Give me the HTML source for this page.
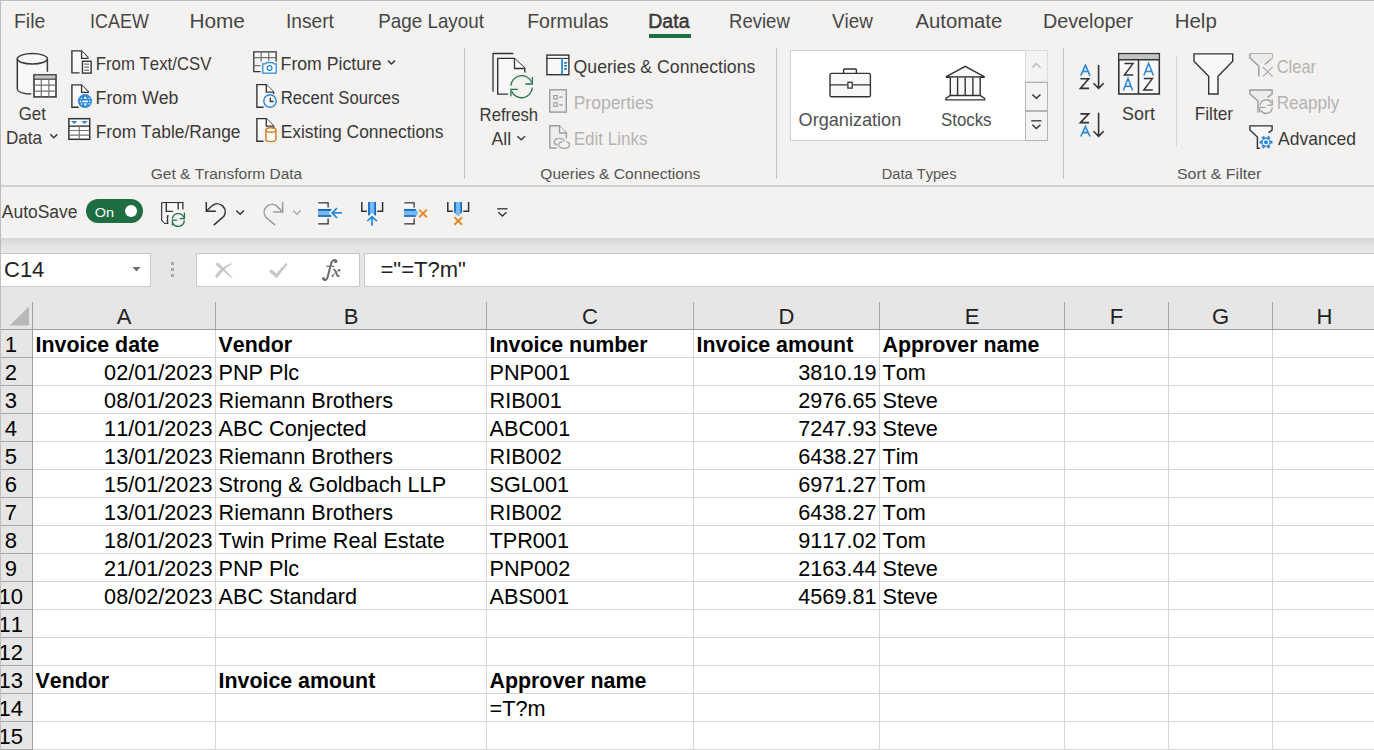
<!DOCTYPE html>
<html><head><meta charset="utf-8"><style>
html,body{margin:0;padding:0;width:1374px;height:750px;overflow:hidden;background:#f3f2f1}
svg{display:block}
text{font-family:"Liberation Sans",sans-serif;font-kerning:none}
</style></head><body>
<svg width="1374" height="750" viewBox="0 0 1374 750">
<rect x="0" y="0" width="1374" height="750" fill="#f3f2f1"/>
<!-- window border -->
<rect x="0" y="0" width="1374" height="1" fill="#bdbdbc"/>
<rect x="0" y="0" width="1" height="750" fill="#bdbdbc"/>
<rect x="1" y="1" width="1373" height="1" fill="#f8f8f7"/>
<!-- tab underline -->
<rect x="649" y="34" width="42" height="4" fill="#1e7145"/>
<!-- ribbon bottom -->
<rect x="0" y="185" width="1374" height="2" fill="#d2d1d0"/>
<!-- group separators -->
<rect x="464" y="48" width="1" height="131" fill="#c8c6c4"/>
<rect x="776" y="48" width="1" height="131" fill="#c8c6c4"/>
<rect x="1063" y="48" width="1" height="131" fill="#c8c6c4"/>
<rect x="1176" y="56" width="1" height="91" fill="#d6d5d4"/>
<!-- QAT / formula bar area -->
<rect x="1" y="238" width="1373" height="64" fill="#e6e6e6"/>
<rect x="1" y="238" width="1373" height="2" fill="#d6d6d6"/>
<rect x="1" y="240" width="1373" height="2" fill="#dbdbdb"/>
<rect x="1" y="242" width="1373" height="2" fill="#dfdfdf"/>
<rect x="1" y="244" width="1373" height="2" fill="#e3e3e3"/>
<!-- name box -->
<rect x="0.5" y="253.5" width="150" height="33" fill="#fff" stroke="#c8c8c8"/>
<path d="M132.5 267 L140.5 267 L136.5 271.5 Z" fill="#6e6e6e"/>
<rect x="171" y="262" width="3" height="3" fill="#a8a8a8"/>
<rect x="171" y="268" width="3" height="3" fill="#a8a8a8"/>
<rect x="171" y="274" width="3" height="3" fill="#a8a8a8"/>
<rect x="196.5" y="253.5" width="163" height="33" fill="#fff" stroke="#c8c8c8"/>
<rect x="364.5" y="253.5" width="1010" height="33" fill="#fff" stroke="#c8c8c8"/>
<text x="4" y="277" font-size="22" fill="#222">C14</text>
<text x="380.5" y="277.3" font-size="22" fill="#222">="=T?m"</text>
<!-- data types gallery -->
<rect x="790.5" y="50.5" width="257" height="90" fill="#fff" stroke="#d0d0d0"/>
<!-- autosave toggle -->
<rect x="86" y="199" width="57" height="24" rx="12" fill="#1e6e42"/>
<circle cx="131" cy="211" r="6" fill="#fff"/>
<rect x="0" y="302" width="1374" height="27" fill="#e6e6e6"/><rect x="0" y="330" width="32" height="420" fill="#e6e6e6"/><rect x="33" y="330" width="1341" height="420" fill="#ffffff"/><line x1="33" y1="357.5" x2="1374" y2="357.5" stroke="#d6d6d6"/><line x1="0" y1="357.5" x2="32" y2="357.5" stroke="#a8a8a8"/><line x1="33" y1="385.5" x2="1374" y2="385.5" stroke="#d6d6d6"/><line x1="0" y1="385.5" x2="32" y2="385.5" stroke="#a8a8a8"/><line x1="33" y1="413.5" x2="1374" y2="413.5" stroke="#d6d6d6"/><line x1="0" y1="413.5" x2="32" y2="413.5" stroke="#a8a8a8"/><line x1="33" y1="441.5" x2="1374" y2="441.5" stroke="#d6d6d6"/><line x1="0" y1="441.5" x2="32" y2="441.5" stroke="#a8a8a8"/><line x1="33" y1="469.5" x2="1374" y2="469.5" stroke="#d6d6d6"/><line x1="0" y1="469.5" x2="32" y2="469.5" stroke="#a8a8a8"/><line x1="33" y1="497.5" x2="1374" y2="497.5" stroke="#d6d6d6"/><line x1="0" y1="497.5" x2="32" y2="497.5" stroke="#a8a8a8"/><line x1="33" y1="525.5" x2="1374" y2="525.5" stroke="#d6d6d6"/><line x1="0" y1="525.5" x2="32" y2="525.5" stroke="#a8a8a8"/><line x1="33" y1="553.5" x2="1374" y2="553.5" stroke="#d6d6d6"/><line x1="0" y1="553.5" x2="32" y2="553.5" stroke="#a8a8a8"/><line x1="33" y1="581.5" x2="1374" y2="581.5" stroke="#d6d6d6"/><line x1="0" y1="581.5" x2="32" y2="581.5" stroke="#a8a8a8"/><line x1="33" y1="609.5" x2="1374" y2="609.5" stroke="#d6d6d6"/><line x1="0" y1="609.5" x2="32" y2="609.5" stroke="#a8a8a8"/><line x1="33" y1="637.5" x2="1374" y2="637.5" stroke="#d6d6d6"/><line x1="0" y1="637.5" x2="32" y2="637.5" stroke="#a8a8a8"/><line x1="33" y1="665.5" x2="1374" y2="665.5" stroke="#d6d6d6"/><line x1="0" y1="665.5" x2="32" y2="665.5" stroke="#a8a8a8"/><line x1="33" y1="693.5" x2="1374" y2="693.5" stroke="#d6d6d6"/><line x1="0" y1="693.5" x2="32" y2="693.5" stroke="#a8a8a8"/><line x1="33" y1="721.5" x2="1374" y2="721.5" stroke="#d6d6d6"/><line x1="0" y1="721.5" x2="32" y2="721.5" stroke="#a8a8a8"/><line x1="33" y1="749.5" x2="1374" y2="749.5" stroke="#d6d6d6"/><line x1="0" y1="749.5" x2="32" y2="749.5" stroke="#a8a8a8"/><line x1="215.5" y1="330" x2="215.5" y2="750" stroke="#d6d6d6"/><line x1="215.5" y1="302" x2="215.5" y2="329" stroke="#a8a8a8"/><line x1="486.5" y1="330" x2="486.5" y2="750" stroke="#d6d6d6"/><line x1="486.5" y1="302" x2="486.5" y2="329" stroke="#a8a8a8"/><line x1="693.5" y1="330" x2="693.5" y2="750" stroke="#d6d6d6"/><line x1="693.5" y1="302" x2="693.5" y2="329" stroke="#a8a8a8"/><line x1="879.5" y1="330" x2="879.5" y2="750" stroke="#d6d6d6"/><line x1="879.5" y1="302" x2="879.5" y2="329" stroke="#a8a8a8"/><line x1="1064.5" y1="330" x2="1064.5" y2="750" stroke="#d6d6d6"/><line x1="1064.5" y1="302" x2="1064.5" y2="329" stroke="#a8a8a8"/><line x1="1168.5" y1="330" x2="1168.5" y2="750" stroke="#d6d6d6"/><line x1="1168.5" y1="302" x2="1168.5" y2="329" stroke="#a8a8a8"/><line x1="1272.5" y1="330" x2="1272.5" y2="750" stroke="#d6d6d6"/><line x1="1272.5" y1="302" x2="1272.5" y2="329" stroke="#a8a8a8"/><line x1="32.5" y1="302" x2="32.5" y2="750" stroke="#a0a0a0"/><line x1="0" y1="329.5" x2="1374" y2="329.5" stroke="#9e9e9e"/><path d="M9.6 325.6 L29 325.6 L29 306.6 Z" fill="#b8b8b8"/><text x="124.0" y="323.5" font-size="22" text-anchor="middle" fill="#222">A</text><text x="351.0" y="323.5" font-size="22" text-anchor="middle" fill="#222">B</text><text x="590.0" y="323.5" font-size="22" text-anchor="middle" fill="#222">C</text><text x="786.5" y="323.5" font-size="22" text-anchor="middle" fill="#222">D</text><text x="972.0" y="323.5" font-size="22" text-anchor="middle" fill="#222">E</text><text x="1116.5" y="323.5" font-size="22" text-anchor="middle" fill="#222">F</text><text x="1220.5" y="323.5" font-size="22" text-anchor="middle" fill="#222">G</text><text x="1324.5" y="323.5" font-size="22" text-anchor="middle" fill="#222">H</text><text x="10.8" y="351.6" font-size="22" text-anchor="middle" fill="#000">1</text><text x="10.8" y="379.6" font-size="22" text-anchor="middle" fill="#000">2</text><text x="10.8" y="407.6" font-size="22" text-anchor="middle" fill="#000">3</text><text x="10.8" y="435.6" font-size="22" text-anchor="middle" fill="#000">4</text><text x="10.8" y="463.6" font-size="22" text-anchor="middle" fill="#000">5</text><text x="10.8" y="491.6" font-size="22" text-anchor="middle" fill="#000">6</text><text x="10.8" y="519.6" font-size="22" text-anchor="middle" fill="#000">7</text><text x="10.8" y="547.6" font-size="22" text-anchor="middle" fill="#000">8</text><text x="10.8" y="575.6" font-size="22" text-anchor="middle" fill="#000">9</text><text x="10.8" y="603.6" font-size="22" text-anchor="middle" fill="#000">10</text><text x="10.8" y="631.6" font-size="22" text-anchor="middle" fill="#000">11</text><text x="10.8" y="659.6" font-size="22" text-anchor="middle" fill="#000">12</text><text x="10.8" y="687.6" font-size="22" text-anchor="middle" fill="#000">13</text><text x="10.8" y="715.6" font-size="22" text-anchor="middle" fill="#000">14</text><text x="10.8" y="743.6" font-size="22" text-anchor="middle" fill="#000">15</text><text transform="translate(35.5 352.3) scale(0.972 1)" font-size="22" text-anchor="start" font-weight="bold" fill="#000">Invoice date</text><text transform="translate(218.5 352.3) scale(0.972 1)" font-size="22" text-anchor="start" font-weight="bold" fill="#000">Vendor</text><text transform="translate(489.5 352.3) scale(0.972 1)" font-size="22" text-anchor="start" font-weight="bold" fill="#000">Invoice number</text><text transform="translate(696.5 352.3) scale(0.972 1)" font-size="22" text-anchor="start" font-weight="bold" fill="#000">Invoice amount</text><text transform="translate(882.5 352.3) scale(0.972 1)" font-size="22" text-anchor="start" font-weight="bold" fill="#000">Approver name</text><text transform="translate(212.5 380.3) scale(0.985 1)" font-size="22" text-anchor="end" fill="#000">02/01/2023</text><text transform="translate(218.5 380.3) scale(0.985 1)" font-size="22" text-anchor="start" fill="#000">PNP Plc</text><text transform="translate(489.5 380.3) scale(0.985 1)" font-size="22" text-anchor="start" fill="#000">PNP001</text><text transform="translate(876.5 380.3) scale(0.985 1)" font-size="22" text-anchor="end" fill="#000">3810.19</text><text transform="translate(882.5 380.3) scale(0.985 1)" font-size="22" text-anchor="start" fill="#000">Tom</text><text transform="translate(212.5 408.3) scale(0.985 1)" font-size="22" text-anchor="end" fill="#000">08/01/2023</text><text transform="translate(218.5 408.3) scale(0.985 1)" font-size="22" text-anchor="start" fill="#000">Riemann Brothers</text><text transform="translate(489.5 408.3) scale(0.985 1)" font-size="22" text-anchor="start" fill="#000">RIB001</text><text transform="translate(876.5 408.3) scale(0.985 1)" font-size="22" text-anchor="end" fill="#000">2976.65</text><text transform="translate(882.5 408.3) scale(0.985 1)" font-size="22" text-anchor="start" fill="#000">Steve</text><text transform="translate(212.5 436.3) scale(0.985 1)" font-size="22" text-anchor="end" fill="#000">11/01/2023</text><text transform="translate(218.5 436.3) scale(0.985 1)" font-size="22" text-anchor="start" fill="#000">ABC Conjected</text><text transform="translate(489.5 436.3) scale(0.985 1)" font-size="22" text-anchor="start" fill="#000">ABC001</text><text transform="translate(876.5 436.3) scale(0.985 1)" font-size="22" text-anchor="end" fill="#000">7247.93</text><text transform="translate(882.5 436.3) scale(0.985 1)" font-size="22" text-anchor="start" fill="#000">Steve</text><text transform="translate(212.5 464.3) scale(0.985 1)" font-size="22" text-anchor="end" fill="#000">13/01/2023</text><text transform="translate(218.5 464.3) scale(0.985 1)" font-size="22" text-anchor="start" fill="#000">Riemann Brothers</text><text transform="translate(489.5 464.3) scale(0.985 1)" font-size="22" text-anchor="start" fill="#000">RIB002</text><text transform="translate(876.5 464.3) scale(0.985 1)" font-size="22" text-anchor="end" fill="#000">6438.27</text><text transform="translate(882.5 464.3) scale(0.985 1)" font-size="22" text-anchor="start" fill="#000">Tim</text><text transform="translate(212.5 492.3) scale(0.985 1)" font-size="22" text-anchor="end" fill="#000">15/01/2023</text><text transform="translate(218.5 492.3) scale(0.985 1)" font-size="22" text-anchor="start" fill="#000">Strong &amp; Goldbach LLP</text><text transform="translate(489.5 492.3) scale(0.985 1)" font-size="22" text-anchor="start" fill="#000">SGL001</text><text transform="translate(876.5 492.3) scale(0.985 1)" font-size="22" text-anchor="end" fill="#000">6971.27</text><text transform="translate(882.5 492.3) scale(0.985 1)" font-size="22" text-anchor="start" fill="#000">Tom</text><text transform="translate(212.5 520.3) scale(0.985 1)" font-size="22" text-anchor="end" fill="#000">13/01/2023</text><text transform="translate(218.5 520.3) scale(0.985 1)" font-size="22" text-anchor="start" fill="#000">Riemann Brothers</text><text transform="translate(489.5 520.3) scale(0.985 1)" font-size="22" text-anchor="start" fill="#000">RIB002</text><text transform="translate(876.5 520.3) scale(0.985 1)" font-size="22" text-anchor="end" fill="#000">6438.27</text><text transform="translate(882.5 520.3) scale(0.985 1)" font-size="22" text-anchor="start" fill="#000">Tom</text><text transform="translate(212.5 548.3) scale(0.985 1)" font-size="22" text-anchor="end" fill="#000">18/01/2023</text><text transform="translate(218.5 548.3) scale(0.985 1)" font-size="22" text-anchor="start" fill="#000">Twin Prime Real Estate</text><text transform="translate(489.5 548.3) scale(0.985 1)" font-size="22" text-anchor="start" fill="#000">TPR001</text><text transform="translate(876.5 548.3) scale(0.985 1)" font-size="22" text-anchor="end" fill="#000">9117.02</text><text transform="translate(882.5 548.3) scale(0.985 1)" font-size="22" text-anchor="start" fill="#000">Tom</text><text transform="translate(212.5 576.3) scale(0.985 1)" font-size="22" text-anchor="end" fill="#000">21/01/2023</text><text transform="translate(218.5 576.3) scale(0.985 1)" font-size="22" text-anchor="start" fill="#000">PNP Plc</text><text transform="translate(489.5 576.3) scale(0.985 1)" font-size="22" text-anchor="start" fill="#000">PNP002</text><text transform="translate(876.5 576.3) scale(0.985 1)" font-size="22" text-anchor="end" fill="#000">2163.44</text><text transform="translate(882.5 576.3) scale(0.985 1)" font-size="22" text-anchor="start" fill="#000">Steve</text><text transform="translate(212.5 604.3) scale(0.985 1)" font-size="22" text-anchor="end" fill="#000">08/02/2023</text><text transform="translate(218.5 604.3) scale(0.985 1)" font-size="22" text-anchor="start" fill="#000">ABC Standard</text><text transform="translate(489.5 604.3) scale(0.985 1)" font-size="22" text-anchor="start" fill="#000">ABS001</text><text transform="translate(876.5 604.3) scale(0.985 1)" font-size="22" text-anchor="end" fill="#000">4569.81</text><text transform="translate(882.5 604.3) scale(0.985 1)" font-size="22" text-anchor="start" fill="#000">Steve</text><text transform="translate(35.5 688.3) scale(0.972 1)" font-size="22" text-anchor="start" font-weight="bold" fill="#000">Vendor</text><text transform="translate(218.5 688.3) scale(0.972 1)" font-size="22" text-anchor="start" font-weight="bold" fill="#000">Invoice amount</text><text transform="translate(489.5 688.3) scale(0.972 1)" font-size="22" text-anchor="start" font-weight="bold" fill="#000">Approver name</text><text transform="translate(489.5 716.3) scale(0.985 1)" font-size="22" text-anchor="start" fill="#000">=T?m</text>
<text transform="translate(13.98 28.20) scale(0.9714 1)" font-size="20" font-weight="normal" fill="#464646">File</text><text transform="translate(90.10 28.20) scale(0.8959 1)" font-size="20" font-weight="normal" fill="#464646">ICAEW</text><text transform="translate(189.38 28.20) scale(1.0397 1)" font-size="20" font-weight="normal" fill="#464646">Home</text><text transform="translate(286.00 28.20) scale(0.9583 1)" font-size="20" font-weight="normal" fill="#464646">Insert</text><text transform="translate(378.33 28.20) scale(0.9403 1)" font-size="20" font-weight="normal" fill="#464646">Page Layout</text><text transform="translate(527.17 28.20) scale(0.9771 1)" font-size="20" font-weight="normal" fill="#464646">Formulas</text><text transform="translate(729.05 28.20) scale(0.9260 1)" font-size="20" font-weight="normal" fill="#464646">Review</text><text transform="translate(832.00 28.20) scale(0.9405 1)" font-size="20" font-weight="normal" fill="#464646">View</text><text transform="translate(915.50 28.20) scale(1.0142 1)" font-size="20" font-weight="normal" fill="#464646">Automate</text><text transform="translate(1042.95 28.20) scale(0.9888 1)" font-size="20" font-weight="normal" fill="#464646">Developer</text><text transform="translate(1174.70 28.20) scale(1.0243 1)" font-size="20" font-weight="normal" fill="#464646">Help</text><text transform="translate(648.28 28.20) scale(0.9752 1)" font-size="20" fill="#3b3a39" stroke="#3b3a39" stroke-width="0.55">Data</text><text transform="translate(18.71 120.00) scale(0.9352 1)" font-size="18" font-weight="normal" fill="#3b3a39">Get</text><text transform="translate(5.96 143.70) scale(0.9502 1)" font-size="18" font-weight="normal" fill="#3b3a39">Data</text><text transform="translate(95.69 69.70) scale(0.9340 1)" font-size="18" font-weight="normal" fill="#3b3a39">From Text/CSV</text><text transform="translate(95.61 104.00) scale(0.9869 1)" font-size="18" font-weight="normal" fill="#3b3a39">From Web</text><text transform="translate(95.64 137.80) scale(0.9653 1)" font-size="18" font-weight="normal" fill="#3b3a39">From Table/Range</text><text transform="translate(280.62 70.00) scale(0.9814 1)" font-size="18" font-weight="normal" fill="#3b3a39">From Picture</text><text transform="translate(280.70 103.80) scale(0.9279 1)" font-size="18" font-weight="normal" fill="#3b3a39">Recent Sources</text><text transform="translate(280.64 138.00) scale(0.9692 1)" font-size="18" font-weight="normal" fill="#3b3a39">Existing Connections</text><text transform="translate(150.77 179.00) scale(0.9995 1)" font-size="15.5" font-weight="normal" fill="#555">Get &amp; Transform Data</text><text transform="translate(479.59 120.50) scale(0.9289 1)" font-size="18" font-weight="normal" fill="#3b3a39">Refresh</text><text transform="translate(491.60 144.80) scale(0.9778 1)" font-size="18" font-weight="normal" fill="#3b3a39">All</text><text transform="translate(573.57 72.70) scale(0.9832 1)" font-size="18" font-weight="normal" fill="#3b3a39">Queries &amp; Connections</text><text transform="translate(573.63 109.00) scale(0.9742 1)" font-size="18" font-weight="normal" fill="#b4b3b2">Properties</text><text transform="translate(573.67 145.00) scale(0.9465 1)" font-size="18" font-weight="normal" fill="#b4b3b2">Edit Links</text><text transform="translate(540.27 178.80) scale(1.0052 1)" font-size="15.5" font-weight="normal" fill="#555">Queries &amp; Connections</text><text transform="translate(798.55 126.00) scale(1.0069 1)" font-size="18" font-weight="normal" fill="#505050">Organization</text><text transform="translate(940.97 126.00) scale(0.9359 1)" font-size="18" font-weight="normal" fill="#505050">Stocks</text><text transform="translate(881.65 178.80) scale(0.9464 1)" font-size="15.5" font-weight="normal" fill="#555">Data Types</text><text transform="translate(1122.04 120.00) scale(0.9966 1)" font-size="18" font-weight="normal" fill="#3b3a39">Sort</text><text transform="translate(1194.65 119.80) scale(0.9609 1)" font-size="18" font-weight="normal" fill="#3b3a39">Filter</text><text transform="translate(1276.63 72.80) scale(0.9173 1)" font-size="18" font-weight="normal" fill="#b4b3b2">Clear</text><text transform="translate(1276.66 109.00) scale(0.9500 1)" font-size="18" font-weight="normal" fill="#b4b3b2">Reapply</text><text transform="translate(1278.00 145.00) scale(0.9741 1)" font-size="18" font-weight="normal" fill="#3b3a39">Advanced</text><text transform="translate(1176.90 179.00) scale(1.0325 1)" font-size="15.5" font-weight="normal" fill="#555">Sort &amp; Filter</text><text transform="translate(1.80 218.00) scale(0.9699 1)" font-size="18" font-weight="normal" fill="#3b3a39">AutoSave</text><text transform="translate(94.82 216.80) scale(1.0711 1)" font-size="13.5" font-weight="normal" fill="#ffffff">On</text>
<g fill="none" stroke-linejoin="miter">
<!-- Get Data: cylinder + table -->
<path d="M17.3 58.8 V89 Q17.3 93.6 31.2 94.2 L33 94.2 V71.8 L47.4 71.8 V58.8 Z" fill="#f8f8f8"/>
<path d="M17.3 58.8 V89 Q17.8 93.4 31.2 94.1" stroke="#3b3a39" stroke-width="1.5"/>
<path d="M47.4 58.8 V71.8" stroke="#3b3a39" stroke-width="1.5"/>
<ellipse cx="32.35" cy="58.8" rx="15.05" ry="5.2" fill="#f8f8f8" stroke="#3b3a39" stroke-width="1.5"/>
<rect x="32.2" y="73.1" width="25.6" height="25.6" fill="#f3f2f1" stroke="none"/>
<rect x="34" y="74.9" width="22" height="22" fill="#fff" stroke="#3b3a39" stroke-width="1.6"/>
<rect x="34.8" y="75.7" width="20.4" height="3.2" fill="#c4c4c4"/>
<path d="M34 79.2 H56" stroke="#3b3a39" stroke-width="1.2"/>
<path d="M34 85.1 H56 M34 91.1 H56 M41.3 79.2 V96.9 M48.9 79.2 V96.9" stroke="#707070" stroke-width="1.2"/>

<!-- From Text/CSV -->
<path d="M71.9 50.9 H81.4 L88.3 57.8 V60" fill="#f8f8f8" stroke="none"/>
<path d="M71.9 50.9 V72.9 H79.6 V60 H88.3 V57.8 L81.4 50.9 Z" fill="#f8f8f8"/>
<path d="M79.6 72.9 H71.9 V50.9 H81.4 L88.3 57.8" stroke="#333" stroke-width="1.4"/>
<path d="M81.6 50.9 V58.4 H88.5" stroke="#333" stroke-width="1.3" fill="#fff"/>
<rect x="82.5" y="61.3" width="8.6" height="11.8" fill="#fff" stroke="#333" stroke-width="1.4"/>
<path d="M84.3 64.1 H89 M84.3 67.1 H89 M84.3 70.1 H89" stroke="#666" stroke-width="1.1"/>

<!-- From Web -->
<path d="M78.6 107.3 H71.9 V84.9 H81.4 L88.3 91.8 V93" stroke="#333" stroke-width="1.4" fill="#f8f8f8"/>
<path d="M81.6 84.9 V92.4 H88.5" stroke="#333" stroke-width="1.3" fill="#fff"/>
<circle cx="85" cy="101.1" r="8" fill="#f3f2f1" stroke="none"/>
<circle cx="85" cy="101.1" r="7" fill="#2b88d8" stroke="none"/>
<g fill="#fff" stroke="none">
<path d="M85.3 96.2 L87.2 98.8 H83.5 Z"/>
<path d="M85.3 106.2 L87.2 103.5 H83.5 Z"/>
<rect x="82.2" y="100.6" width="5.8" height="1.6"/>
<rect x="80.8" y="97.8" width="1.3" height="1.3"/>
<rect x="88.6" y="97.8" width="1.3" height="1.3"/>
<rect x="79.9" y="100.7" width="1.3" height="1.4"/>
<rect x="89" y="100.7" width="1.3" height="1.4"/>
<rect x="80.8" y="103.3" width="1.3" height="1.3"/>
<rect x="88.6" y="103.3" width="1.3" height="1.3"/>
</g>

<!-- From Table/Range -->
<rect x="68.9" y="118.7" width="20.8" height="20.6" fill="#fff" stroke="#333" stroke-width="1.5"/>
<path d="M68.9 126.1 H89.7" stroke="#333" stroke-width="1.4"/>
<path d="M68.9 130.5 H89.7 M68.9 135.1 H89.7 M79.3 126.1 V139.3" stroke="#777" stroke-width="1.2"/>
<path d="M71 121 H77.3 L74.2 124 Z M81.4 121 H87.7 L84.6 124 Z" fill="#2b88d8" stroke="none"/>

<!-- From Picture -->
<path d="M260.6 71.6 H253.8 V51.8 H276.1 V61.4" stroke="#333" stroke-width="1.3" fill="#f8f8f8"/>
<path d="M253.8 57.6 H276.1 M261.2 51.8 V61.5 M268.8 51.8 V61.5 M253.8 65.6 H260.6" stroke="#707070" stroke-width="1.2"/>
<path d="M262.3 63.8 H265.6 L266.8 62.2 H272.6 L273.8 63.8 H276.6 V73.6 H262.3 Z" fill="#f3f2f1" stroke="#f3f2f1" stroke-width="2.4"/>
<path d="M262.8 63.8 H265.6 L266.8 62.6 H272.6 L273.8 63.8 H276.2 V73.2 H262.8 Z" fill="#fff" stroke="#2b88d8" stroke-width="1.3"/>
<circle cx="269.6" cy="68.1" r="2.4" stroke="#2b88d8" stroke-width="1.3"/>

<!-- Recent Sources -->
<path d="M263.6 107.2 H256.9 V84.6 H266.2 L273.6 92 V94" stroke="#333" stroke-width="1.4" fill="#f8f8f8"/>
<path d="M266.3 84.6 V92.1 H273.6" stroke="#333" stroke-width="1.3" fill="#fff"/>
<circle cx="270" cy="101" r="7.6" fill="#f3f2f1" stroke="none"/>
<circle cx="270" cy="101" r="6.2" fill="#f8f8f8" stroke="#2b88d8" stroke-width="1.4"/>
<path d="M270.3 97.4 V101.5 H273.6" stroke="#333" stroke-width="1.3"/>

<!-- Existing Connections -->
<path d="M263.6 141.2 H256.9 V118.6 H266.2 L273.6 126 V128" stroke="#333" stroke-width="1.4" fill="#f8f8f8"/>
<path d="M266.3 118.6 V126.1 H273.6" stroke="#333" stroke-width="1.3" fill="#fff"/>
<path d="M264.2 130 V140 Q264.2 142.6 270.9 142.6 Q277.6 142.6 277.6 140 V130 Z" fill="#f3f2f1" stroke="#f3f2f1" stroke-width="1.5"/>
<path d="M265.9 130 V139.6 Q265.9 141.6 270.9 141.6 Q275.9 141.6 275.9 139.6 V130" fill="#fff" stroke="#d07a20" stroke-width="1.4"/>
<ellipse cx="270.9" cy="130" rx="5" ry="2.3" fill="#fff" stroke="#d07a20" stroke-width="1.4"/>

<!-- Refresh All -->
<path d="M493 91.7 V53.5 H513.3" stroke="#333" stroke-width="1.3"/>
<path d="M508.1 94.1 H497.7 V58.4 H514.4 L524.8 68.4 V72.6" stroke="#333" stroke-width="1.4" fill="#f8f8f8"/>
<path d="M514.5 58.4 V68.5 H524.8" stroke="#333" stroke-width="1.3" fill="#fff"/>
<circle cx="521.6" cy="86.6" r="12.6" fill="#f3f2f1" stroke="none"/>
<path d="M510.9 85.6 A10.8 10.8 0 0 1 531.6 82.2" stroke="#217346" stroke-width="1.3"/>
<path d="M532.4 77.1 V84 H525.4" stroke="#217346" stroke-width="1.3"/>
<path d="M532.3 87.6 A10.8 10.8 0 0 1 511.6 91.2" stroke="#217346" stroke-width="1.3"/>
<path d="M510.9 96.2 V89.3 H517.8" stroke="#217346" stroke-width="1.3"/>

<!-- Queries & Connections -->
<rect x="546.9" y="55.1" width="22" height="19.6" fill="#fff" stroke="#333" stroke-width="1.4"/>
<rect x="548" y="59.2" width="13" height="14.8" fill="#f8f8f8" stroke="none"/>
<path d="M546.9 58.4 H568.9" stroke="#333" stroke-width="1.1"/>
<path d="M562.1 58.6 V74.4" stroke="#2b88d8" stroke-width="1.8"/>
<path d="M564 62.9 H567 M564 65.9 H567 M564 68.9 H567" stroke="#2b88d8" stroke-width="1.8"/>

<!-- Properties -->
<rect x="549.7" y="89.8" width="16.6" height="22.3" fill="#eee" stroke="#9a9a9a" stroke-width="1.4"/>
<rect x="553.8" y="95.6" width="3.4" height="3.4" fill="#fff" stroke="#9a9a9a" stroke-width="1.2"/>
<rect x="553.8" y="102.8" width="3.4" height="3.4" fill="#fff" stroke="#9a9a9a" stroke-width="1.2"/>
<path d="M559.2 97.2 H562.8 M559.2 104.8 H562.8" stroke="#9a9a9a" stroke-width="1.2"/>

<!-- Edit Links -->
<path d="M556.6 148 H549.8 V125.8 H559.4 L566.4 132.8 V138.4" stroke="#9a9a9a" stroke-width="1.4" fill="#eee"/>
<path d="M559.6 125.8 V133 H566.4" stroke="#9a9a9a" stroke-width="1.3" fill="#f6f6f6"/>
<path d="M557.2 145 C553.6 144.2 553 139.6 557.5 138.6 C560 138 564.2 138.4 564.6 141.4" stroke="#a8a8a8" stroke-width="1.4" fill="none"/>
<path d="M566.4 141.8 C570.8 142.6 570.6 148.4 564.8 148.4 C559.6 148.4 557.6 145.6 558.8 143.6 C559.4 142.4 560.8 141.9 562.6 141.8" stroke="#a8a8a8" stroke-width="1.4" fill="none"/>
<!-- Briefcase -->
<rect x="843.6" y="69" width="12.8" height="5" rx="1" fill="#fff" stroke="#333" stroke-width="1.4"/>
<rect x="830" y="73.4" width="40.4" height="23.4" rx="1.6" fill="#f8f8f8" stroke="#333" stroke-width="1.4"/>
<path d="M830 84.9 H847.6 M852.6 84.9 H870.4" stroke="#333" stroke-width="1.4"/>
<rect x="847.9" y="82.3" width="4.3" height="5.8" fill="#fff" stroke="#333" stroke-width="1.3"/>

<!-- Bank -->
<path d="M945.9 76.9 L965.2 66.3 L984.6 76.9 Z" fill="#f8f8f8" stroke="#333" stroke-width="1.4"/>
<path d="M945.9 77.4 H984.6" stroke="#333" stroke-width="1.4"/>
<rect x="950.3" y="77.6" width="29.9" height="17.9" fill="#f8f8f8" stroke="none"/>
<path d="M950.3 77.6 V95.5 M957.6 77.6 V95.5 M965.2 77.6 V95.5 M972.9 77.6 V95.5 M980.2 77.6 V95.5" stroke="#333" stroke-width="1.4"/>
<path d="M950.3 95.5 H980.2 L984.6 98.4 V99.9 H945.9 V98.4 Z" fill="#fff" stroke="#333" stroke-width="1.4"/>

<!-- gallery scroll buttons -->
<rect x="1025.5" y="50.5" width="22" height="31" fill="#f3f3f3" stroke="#dcdcdc" stroke-width="1"/>
<rect x="1025.5" y="82.5" width="22" height="28" fill="#f3f3f3" stroke="#b4b4b4" stroke-width="1"/>
<rect x="1025.5" y="111.5" width="22" height="29" fill="#f3f3f3" stroke="#b4b4b4" stroke-width="1"/>
<path d="M1032.3 67.6 L1036.4 63.6 L1040.5 67.6" stroke="#b0b0b0" stroke-width="1.3"/>
<path d="M1032.3 94.4 L1036.4 98.3 L1040.5 94.4" stroke="#333" stroke-width="1.4"/>
<path d="M1031.2 120.8 H1041.4" stroke="#333" stroke-width="1.3"/>
<path d="M1032.3 124.8 L1036.4 128.6 L1040.5 124.8" stroke="#333" stroke-width="1.4"/>

<!-- Sort A-Z -->
<path d="M1080.8 75.6 L1085.4 65.2 L1090 75.6 M1082.4 71.5 H1088.4" stroke="#2b88d8" stroke-width="1.6"/>
<path d="M1080.4 78.7 H1088.7 L1080.4 88.4 H1089" stroke="#333" stroke-width="1.6"/>
<path d="M1098.6 64.9 V88.2 M1093.5 83.2 L1098.6 88.3 L1103.7 83.2" stroke="#333" stroke-width="1.6"/>
<!-- Sort Z-A -->
<path d="M1080.4 113.9 H1088.7 L1080.4 122.6 H1089" stroke="#333" stroke-width="1.6"/>
<path d="M1080.8 136.5 L1085.4 126.7 L1090 136.5 M1082.4 132.6 H1088.4" stroke="#2b88d8" stroke-width="1.6"/>
<path d="M1098.6 112.8 V136.3 M1093.5 131.2 L1098.6 136.3 L1103.7 131.2" stroke="#333" stroke-width="1.6"/>

<!-- Sort big -->
<rect x="1118.8" y="53.7" width="40.5" height="40.3" fill="#f8f8f8" stroke="#333" stroke-width="1.6"/>
<rect x="1119.5" y="54.4" width="39.1" height="4.8" fill="#c4c4c4" stroke="none"/>
<path d="M1118.8 59.7 H1159.3 M1138.5 59.7 V94" stroke="#333" stroke-width="1.5"/>
<path d="M1124.4 63.6 H1133 L1124.4 75.1 H1133.2" stroke="#333" stroke-width="1.5"/>
<path d="M1123.3 90.4 L1128 78.4 L1132.7 90.4 M1125 86.3 H1131" stroke="#2b88d8" stroke-width="1.5"/>
<path d="M1143.8 75.5 L1148.6 63.4 L1153.4 75.5 M1145.5 71.4 H1151.7" stroke="#2b88d8" stroke-width="1.5"/>
<path d="M1143.8 78.6 H1152.4 L1143.8 90.1 H1152.8" stroke="#333" stroke-width="1.5"/>

<!-- Filter big -->
<path d="M1194 53.9 H1232.7 V61.3 L1218 76.3 V94 H1208.7 V76.3 L1194 61.3 Z" fill="#f8f8f8" stroke="#333" stroke-width="1.4"/>

<!-- Clear -->
<path d="M1249.9 54 H1272.1 V58 L1264.8 64.6" stroke="#999" stroke-width="1.4" fill="none"/>
<path d="M1249.9 54 H1272.1 V58 L1258.8 66 V76.6 L1258.8 66 L1249.9 58 Z" fill="#ececec" stroke="none"/>
<path d="M1258.8 76.6 V66 L1249.9 58 V54" stroke="#999" stroke-width="1.4"/>
<path d="M1262.8 67 L1272.6 76.6 M1272.6 67 L1262.8 76.6" stroke="#a8a8a8" stroke-width="1.1"/>

<!-- Reapply -->
<path d="M1249.9 90 H1272.1 V94 L1258 101 V112.6 L1258 101 L1249.9 94 Z" fill="#ececec" stroke="none"/>
<path d="M1258 112.6 V101 L1249.9 94 V90 H1272.1 V94 L1267.6 97.4" stroke="#999" stroke-width="1.4"/>
<path d="M1260.2 105.4 A6 6 0 0 1 1271.6 103.2" stroke="#a0a0a0" stroke-width="1.3"/>
<path d="M1272.2 99.2 V105.2 H1267.2" stroke="#a0a0a0" stroke-width="1.3"/>
<path d="M1272.2 107.4 A6 6 0 0 1 1261 110.4" stroke="#a0a0a0" stroke-width="1.3"/>
<path d="M1259.8 112.6 V107.4 H1265.6" stroke="#a0a0a0" stroke-width="1.3"/>

<!-- Advanced -->
<path d="M1249.9 125.9 H1272.1 V130 L1266 135 L1257.4 137 V148.6 L1257.4 137 L1249.9 130 Z" fill="#f8f8f8" stroke="none"/>
<path d="M1259.8 148.3 H1257.4 V137 L1249.9 130 V125.9 H1272.1 V130 L1268.6 132.6" stroke="#333" stroke-width="1.4"/>
<g transform="translate(1266 142.2)">
<path d="M6.80 -1.20 L6.80 1.20 L3.81 2.20 L4.44 5.29 L2.36 6.48 L0.00 4.40 L-2.36 6.48 L-4.44 5.29 L-3.81 2.20 L-6.80 1.20 L-6.80 -1.20 L-3.81 -2.20 L-4.44 -5.29 L-2.36 -6.48 L-0.00 -4.40 L2.36 -6.48 L4.44 -5.29 L3.81 -2.20 Z" fill="#2b88d8" stroke="#f3f2f1" stroke-width="0.6" stroke-linejoin="round"/>
<circle cx="0" cy="0" r="3.3" fill="#fff" stroke="none"/>
<circle cx="0" cy="0" r="2" fill="#2b88d8" stroke="none"/>
</g>

<!-- QAT: save -->
<path d="M161.8 202.6 H182.8 V209.5 M161.8 202.6 V220.2 L164.8 223.4 H168.4" stroke="#333" stroke-width="1.4" fill="none"/>
<path d="M162.5 203.3 H182.1 V213 L172 215 L168 223 H164.8 L162.5 220.2 Z" fill="#f8f8f8" stroke="none"/>
<path d="M166.3 202.6 V211.4 H173" stroke="#333" stroke-width="1.4"/>
<path d="M178.2 202.6 V209.5" stroke="#333" stroke-width="1.4"/>
<path d="M168.8 215.9 H167.5 V223.4" stroke="#333" stroke-width="1.4"/>
<path d="M172.3 218.6 A6 6 0 0 1 183.8 217.4" stroke="#217346" stroke-width="1.3"/>
<path d="M184.4 212.6 V218.7 H179.6" stroke="#217346" stroke-width="1.3"/>
<path d="M184.2 220.3 A6 6 0 0 1 172.9 223.2" stroke="#217346" stroke-width="1.3"/>
<path d="M172.5 225.6 V220.2 H177.2" stroke="#217346" stroke-width="1.3"/>

<!-- undo -->
<path d="M206.3 202 V211.3 H215.8" stroke="#333" stroke-width="1.5"/>
<path d="M206.6 211 L212.6 205.3 A8 8 0 0 1 223.9 216.2 L213.7 225.1" stroke="#333" stroke-width="1.5"/>
<path d="M236.3 210.4 L240.1 214.2 L243.9 210.4" stroke="#333" stroke-width="1.4"/>
<!-- redo -->
<path d="M282.7 202 V211.9 H273.1" stroke="#9a9a9a" stroke-width="1.5"/>
<path d="M282.4 211.6 L276.4 205.6 A8 8 0 0 0 265.5 216.8 L275.1 225.1" stroke="#9a9a9a" stroke-width="1.5"/>
<path d="M293 210.4 L296.9 214.2 L300.7 210.4" stroke="#a8a8a8" stroke-width="1.4"/>

<!-- insert col left -->
<path d="M318.3 202.9 H328 V207.4 M318.3 223.8 H328 V218.5" stroke="#333" stroke-width="1.5"/>
<rect x="318.3" y="203.6" width="9" height="4" fill="#f8f8f8"/>
<rect x="318.3" y="217.2" width="9" height="6" fill="#f8f8f8"/>
<path d="M318 209.1 H331.9 L328.9 212.9 L331.9 216.8 H318 Z" fill="#77b9ea"/>
<path d="M318 209.9 H331.2 M318 216 H331.2" stroke="#0f64c0" stroke-width="1.6"/>
<path d="M331.7 212.9 H341.9 M337 208.2 L332.2 212.9 L337 217.8" stroke="#2b88d8" stroke-width="1.7"/>

<!-- insert row up -->
<path d="M361.8 202 V211.3 H366.9 M382.6 202 V211.3 H377.3" stroke="#333" stroke-width="1.5"/>
<path d="M368.2 202 H376 V215.9 L372.1 212.9 L368.2 215.9 Z" fill="#77b9ea"/>
<path d="M369 202 V215.2 M375.2 202 V215.2" stroke="#0f64c0" stroke-width="1.6"/>
<path d="M372 216.8 V225.7 M367.3 221.2 L372 216.6 L376.9 221.2" stroke="#2b88d8" stroke-width="1.7"/>

<!-- delete col -->
<path d="M404.3 202.9 H414 V207.4 M404.3 223.8 H414 V218.5" stroke="#333" stroke-width="1.5"/>
<rect x="404.3" y="203.6" width="9" height="4" fill="#f8f8f8"/>
<rect x="404.3" y="217.2" width="9" height="6" fill="#f8f8f8"/>
<path d="M404 209.1 H415.8 L418.3 212.9 L415.8 216.8 H404 Z" fill="#77b9ea"/>
<path d="M404 209.9 H415.6 M404 216 H415.6" stroke="#0f64c0" stroke-width="1.6"/>
<path d="M419.2 209.6 L426.8 217.2 M426.8 209.6 L419.2 217.2" stroke="#e08a2a" stroke-width="2"/>

<!-- delete row -->
<path d="M447.8 202 V211.3 H452.9 M468.6 202 V211.3 H463.3" stroke="#333" stroke-width="1.5"/>
<path d="M454.2 202 H462 V212.9 L458.1 216.3 L454.2 212.9 Z" fill="#77b9ea"/>
<path d="M455 202 V212.6 M461.2 202 V212.6" stroke="#0f64c0" stroke-width="1.6"/>
<path d="M454.4 217.1 L462 224.7 M462 217.1 L454.4 224.7" stroke="#e08a2a" stroke-width="2"/>

<!-- customize QAT -->
<path d="M497.2 208.8 H507.6" stroke="#333" stroke-width="1.3"/>
<path d="M498.4 212.2 L502.4 216 L506.4 212.2" stroke="#333" stroke-width="1.4"/>

<!-- ribbon chevrons -->
<path d="M50.4 134.4 L53.8 137.8 L57.2 134.4" stroke="#3b3a39" stroke-width="1.5"/>
<path d="M388 60.6 L391.5 64 L395 60.6" stroke="#3b3a39" stroke-width="1.5"/>
<path d="M517.4 136.2 L521.2 139.8 L525 136.2" stroke="#3b3a39" stroke-width="1.5"/>

<!-- formula bar icons -->
<path d="M215.6 264.4 Q216.4 262.2 218.4 262.8 L232.4 277.4 L231.2 278 Z" fill="#c6c6c6" stroke="none"/>
<path d="M215 276 Q221.5 266.5 231.9 263.1 L231.6 264.2 Q223.5 268.5 217.6 277.6 Q215.6 278.4 215 276 Z" fill="#c6c6c6" stroke="none"/>
<path d="M268.9 271.4 L271.4 268.9 L276.3 273.4 L286.4 262.6 L287.4 264.8 L276.6 278.2 Z" fill="#c8c8c8" stroke="none"/>
</g>
<g fill="#6b6b6b" stroke="none">
<path d="M336.6 260.8 C334.5 259.2 331.8 260 330.8 264.5 L327.8 276.5 C327 279.6 325.5 280.6 323.6 279.6" stroke="#6b6b6b" stroke-width="2" fill="none"/>
<circle cx="335.8" cy="261.5" r="1.6"/>
<circle cx="323.5" cy="278.5" r="1.5"/>
<path d="M326.1 266.2 H334.3" stroke="#6b6b6b" stroke-width="1.2"/>
<path d="M333.2 269.6 C335.2 269.2 335.8 271 336.5 273.5 C337 275.5 337.6 276.6 339.4 275.6" stroke="#6b6b6b" stroke-width="1.8" fill="none"/>
<path d="M339.8 269.8 C338 269.6 335 273.5 332.2 276.2" stroke="#6b6b6b" stroke-width="1" fill="none"/>
<circle cx="339.3" cy="270.2" r="1.2"/>
<circle cx="332.6" cy="275.9" r="1.1"/>
</g>

<rect x="0" y="0" width="1" height="750" fill="#bdbdbc"/>
</svg>
</body></html>
